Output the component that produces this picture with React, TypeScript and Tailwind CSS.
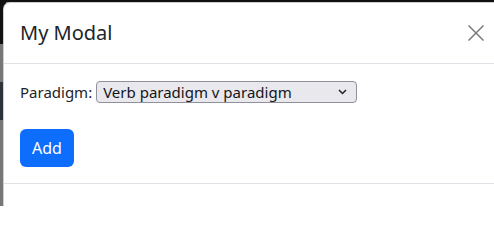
import React from "react";

export default function App() {
  return (
    <div
      className="relative w-[494px] h-[206px] overflow-hidden bg-[#777777]"
      style={{ fontFamily: '"Noto Sans", "Open Sans", sans-serif' }}
    >
      <div className="absolute left-0 top-0 w-[6px] h-[206px] flex flex-col">
        <div className="h-[44px] bg-[#111111]" />
        <div className="h-[38px] bg-[#777777]" />
        <div className="h-[38px] bg-[#2e3338]" />
        <div className="flex-1 bg-[#777777]" />
      </div>
      <div className="absolute left-0 top-0 w-[494px] h-[2px] bg-[#111111]" />
      <div className="absolute left-[3px] top-[2px] w-[520px] h-[210px] bg-white rounded-[7px] border border-[#00000030] flex flex-col text-[#212529]">
        <div className="h-[61px] flex items-center justify-between pl-[16px] pr-[38px] border-b border-[#dee2e6]">
          <div className="text-[20px] leading-[30px]">My Modal</div>
          <svg width="16" height="16" viewBox="0 0 16 16">
            <path d="M0.5 0.5 L15.5 15.5 M15.5 0.5 L0.5 15.5" stroke="#7a7a7a" strokeWidth="1.5" />
          </svg>
        </div>
        <div className="px-[16px] pt-[17px] h-[120px] border-b border-[#dee2e6]">
          <div className="flex items-center h-[22px]">
            <span className="text-[15px] leading-[22px]">Paradigm:</span>
            <div className="ml-[4px] w-[261px] h-[22px] rounded-[4px] border border-[#8f8f9d] bg-[#e9e9ed] flex items-center justify-between pl-[6px] pr-[9px]">
              <span className="text-[15px] leading-[20px] text-[#15151a]">Verb paradigm v paradigm</span>
              <svg width="9" height="6" viewBox="0 0 9 6">
                <path d="M1 1 L4.5 4.5 L8 1" fill="none" stroke="#222" strokeWidth="1.5" />
              </svg>
            </div>
          </div>
          <button className="mt-[26px] w-[54px] h-[38px] rounded-[6px] bg-[#0d6efd] text-white text-[16px] leading-[24px] flex items-center justify-center">
            Add
          </button>
        </div>
      </div>
    </div>
  );
}
